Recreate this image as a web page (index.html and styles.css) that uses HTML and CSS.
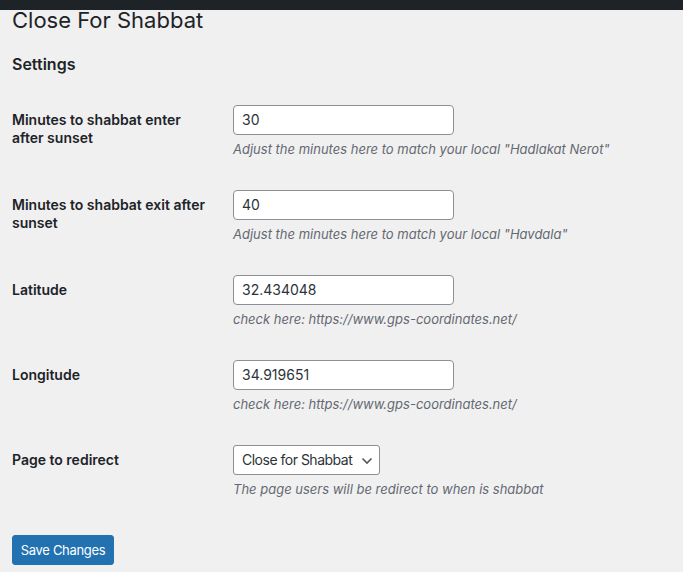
FILE: index.html
```html
<!DOCTYPE html>
<html lang="en">
<head>
<meta charset="utf-8">
<title>Close For Shabbat</title>
<link rel="stylesheet" href="styles.css">
</head>
<body>
<div class="adminbar"></div>
<div class="wrap">
  <h1 class="page-title">Close For Shabbat</h1>
  <h2 class="section-title">Settings</h2>
  <form class="form-table">
    <div class="row">
      <label class="label" for="enter">Minutes to shabbat enter<br>after sunset</label>
      <div class="field">
        <input class="text" id="enter" type="text" value="30">
        <p class="description">Adjust the minutes here to match your local "Hadlakat Nerot"</p>
      </div>
    </div>
    <div class="row">
      <label class="label" for="exit">Minutes to shabbat exit after<br>sunset</label>
      <div class="field">
        <input class="text" id="exit" type="text" value="40">
        <p class="description">Adjust the minutes here to match your local "Havdala"</p>
      </div>
    </div>
    <div class="row">
      <label class="label" for="lat">Latitude</label>
      <div class="field">
        <input class="text" id="lat" type="text" value="32.434048">
        <p class="description">check here: https://www.gps-coordinates.net/</p>
      </div>
    </div>
    <div class="row">
      <label class="label" for="lng">Longitude</label>
      <div class="field">
        <input class="text" id="lng" type="text" value="34.919651">
        <p class="description">check here: https://www.gps-coordinates.net/</p>
      </div>
    </div>
    <div class="row">
      <label class="label" for="page">Page to redirect</label>
      <div class="field">
        <div class="select-wrap">
          <select class="select" id="page"><option>Close for Shabbat</option></select>
          <svg class="chevron" width="12" height="8" viewBox="0 0 12 8"><polyline points="1.5,1.5 6,6 10.5,1.5" fill="none" stroke="#50575e" stroke-width="1.6"/></svg>
        </div>
        <p class="description">The page users will be redirect to when is shabbat</p>
      </div>
    </div>
    <div class="submit">
      <button class="button-primary" type="button">Save Changes</button>
    </div>
  </form>
</div>
</body>
</html>
```
FILE: styles.css
```css
html, body {
  margin: 0;
  padding: 0;
}
body {
  background: #f0f0f1;
  color: #1d2327;
  font-family: Inter, "Liberation Sans", sans-serif;
  font-size: 13px;
  line-height: 1.4;
}
.adminbar {
  position: absolute;
  top: 0;
  left: 0;
  right: 0;
  height: 10px;
  background: #1d2327;
}
.wrap {
  padding: 6px 12px 0 12px;
}
.page-title {
  margin: 0;
  font-size: 22px;
  font-weight: 400;
  line-height: 28.6px;
  color: #1d2327;
}
.section-title {
  margin: 20px 0 0 0;
  font-size: 16px;
  font-weight: 600;
  line-height: 18.2px;
  color: #1d2327;
}
.form-table {
  margin-top: 17px;
  display: flex;
  flex-direction: column;
}
.row {
  display: grid;
  grid-template-columns: 221px 1fr;
  padding: 15px 0 15.5px 0;
}
.label {
  padding-top: 6px;
  font-size: 14px;
  font-weight: 600;
  line-height: 18.2px;
  color: #1d2327;
}
.field {
  display: flex;
  flex-direction: column;
  align-items: flex-start;
}
.text {
  box-sizing: border-box;
  width: 221px;
  height: 30px;
  margin: 0;
  padding: 0 8px;
  border: 1px solid #8c8f94;
  border-radius: 4px;
  background: #fff;
  color: #2c3338;
  font-family: inherit;
  font-size: 14px;
  outline: none;
}
.description {
  margin: 5px 0 0 0;
  font-size: 13px;
  font-style: italic;
  line-height: 19.5px;
  color: #646970;
}
.select-wrap {
  position: relative;
  width: 147px;
  height: 30px;
}
.select {
  -webkit-appearance: none;
  appearance: none;
  box-sizing: border-box;
  width: 147px;
  height: 30px;
  margin: 0;
  padding: 0 24px 0 8px;
  border: 1px solid #8c8f94;
  border-radius: 3px;
  background: #fff;
  color: #2c3338;
  font-family: inherit;
  font-size: 14px;
  letter-spacing: -0.5px;
  outline: none;
}
.chevron {
  position: absolute;
  right: 7px;
  top: 12px;
  pointer-events: none;
}
.submit {
  padding-top: 20px;
}
.button-primary {
  box-sizing: border-box;
  width: 102px;
  height: 30px;
  padding: 0;
  border: 1px solid #2271b1;
  border-radius: 3px;
  background: #2271b1;
  color: #fff;
  font-family: inherit;
  font-size: 13px;
  letter-spacing: -0.3px;
  white-space: nowrap;
  cursor: pointer;
}
```
